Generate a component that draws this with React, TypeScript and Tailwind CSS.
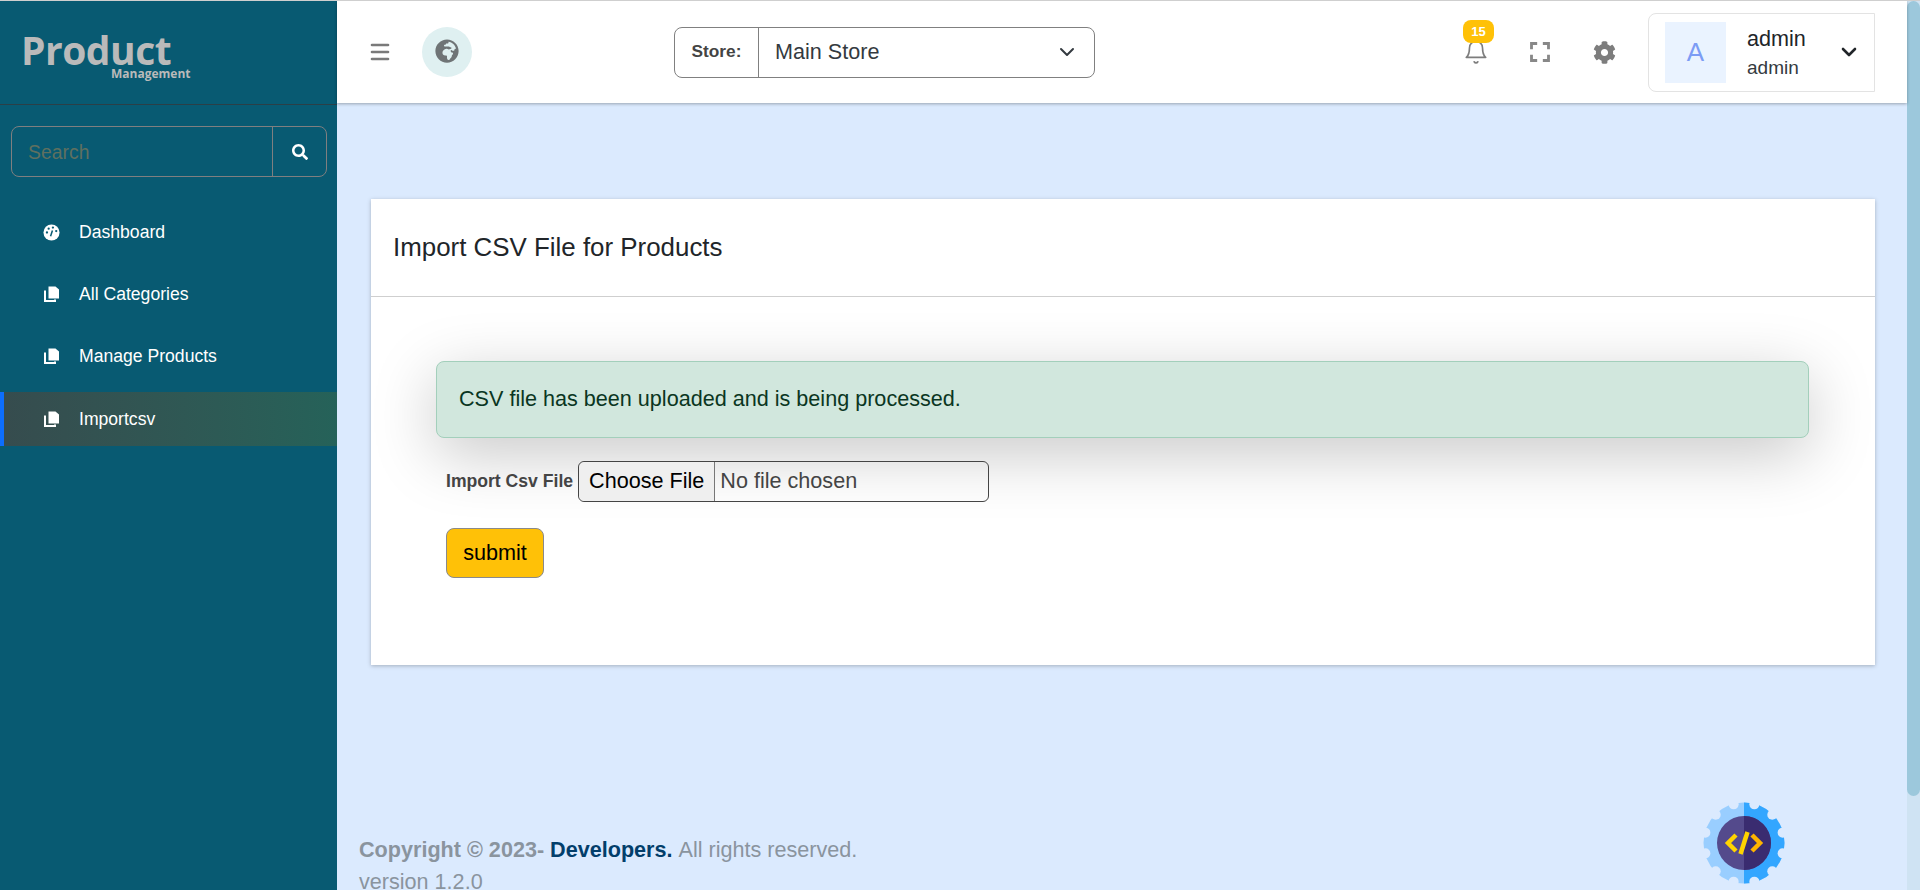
import { ChevronDown, Menu } from "lucide-react";
import { FaCog, FaGlobeAfrica, FaSearch } from "react-icons/fa";
import { MdFullscreen } from "react-icons/md";
import { LuBell } from "react-icons/lu";

function GaugeIcon() {
  return (
    <svg viewBox="0 0 18 18" className="w-[17px] h-[17px]">
      <circle cx="9" cy="9" r="8.5" fill="#fff" />
      <circle cx="4.2" cy="9" r="1.2" fill="#085a72" />
      <circle cx="6" cy="5" r="1.2" fill="#085a72" />
      <circle cx="10.5" cy="3.8" r="1.2" fill="#085a72" />
      <circle cx="14" cy="7.5" r="1.2" fill="#085a72" />
      <path d="M8 13l2-6" stroke="#085a72" strokeWidth="1.6" />
    </svg>
  );
}

function CopyIcon() {
  return (
    <svg viewBox="0 0 15 16" className="w-[15px] h-[16px]">
      <path d="M4.500 0.500h7l3.500 3v9h-10.500z" fill="#fff" />
      <path d="M1 4.500v10.500h10v-1.500" fill="none" stroke="#fff" strokeWidth="2" />
    </svg>
  );
}

const notches = [15, 45, 75, 105, 135, 165, 195, 225, 255, 285, 315, 345];

function DevLogo() {
  return (
    <svg viewBox="0 0 82 82" className="w-[82px] h-[82px]">
      <circle cx="41" cy="41" r="40.500" fill="#99ceff" />
      <path d="M41 0.500a40.500 40.500 0 0 1 0 81z" fill="#33a6ff" />
      {notches.map((deg) => (
        <circle
          key={deg}
          cx={41 + 40 * Math.sin((deg * Math.PI) / 180)}
          cy={41 - 40 * Math.cos((deg * Math.PI) / 180)}
          r="5"
          fill="#dbeafe"
        />
      ))}
      <circle cx="41" cy="41" r="27" fill="#544a8c" />
      <path d="M41 14a27 27 0 0 1 0 54z" fill="#3a2c70" />
      <path d="M33 33l-8 8 8 8" fill="none" stroke="#ffd400" strokeWidth="4.500" />
      <path d="M49 33l8 8-8 8" fill="none" stroke="#ffb400" strokeWidth="4.500" />
      <path d="M44.500 30l-7 22" fill="none" stroke="#ffd400" strokeWidth="4.500" />
    </svg>
  );
}

const navItems = [
  { label: "Dashboard", icon: <GaugeIcon /> },
  { label: "All Categories", icon: <CopyIcon /> },
  { label: "Manage Products", icon: <CopyIcon /> },
];

export default function App() {
  return (
    <div className="h-[890px] w-[1920px] overflow-hidden flex bg-[#dbeafe] border-t border-[#cfcfcf] font-['Liberation_Sans',Arial,sans-serif] text-[#212529]">
      {/* sidebar */}
      <aside className="w-[337px] shrink-0 bg-[#085a72] flex flex-col">
        <div className="h-[104px] shrink-0 border-b border-[#2b3f47] pl-[21px] pt-[26px] text-[#bababa] font-['Open_Sans',sans-serif] font-bold">
          <div className="text-[39px] leading-[46px] tracking-[-0.5px]">Product</div>
          <div className="text-[12px] leading-[12px] ml-[90px] -mt-[5px]">Management</div>
        </div>
        <div className="ml-[11px] mr-[10px] mt-[21px] h-[51px] flex rounded-lg border border-[#7f7f80]">
          <div className="flex-1 pl-[16px] pt-[3px] flex items-center text-[19.4px] text-[#5f7060]">Search</div>
          <div className="w-[54px] border-l border-[#7f7f80] flex items-center justify-center text-white">
            <FaSearch size={16} />
          </div>
        </div>
        <nav className="mt-[24px] flex flex-col">
          {navItems.map((item) => (
            <div key={item.label} className="h-[62px] flex items-center pl-[43px] gap-[19px] text-white text-[17.6px]">
              <span className="w-[17px] flex justify-center">{item.icon}</span>
              {item.label}
            </div>
          ))}
          <div className="h-[54px] mt-[5px] flex items-center pl-[43px] gap-[19px] text-white text-[17.6px] border-l-4 border-[#0d6efd] bg-gradient-to-r from-[#364c4e] to-[#256259]">
            <span className="-ml-[4px] w-[17px] flex justify-center"><CopyIcon /></span>
            Importcsv
          </div>
        </nav>
      </aside>

      {/* main column */}
      <div className="flex-1 flex flex-col min-w-0">
        <header className="h-[102px] shrink-0 bg-white shadow-[0_1px_3px_rgba(0,0,0,0.3)] flex items-center relative">
          <Menu className="ml-[31px] w-[24px] h-[24px] text-[#7a7a7a]" strokeWidth={2.6} />
          <div className="ml-[30px] w-[50px] h-[50px] rounded-full bg-[#dff0f1] flex items-center justify-center text-[#6f7476]">
            <FaGlobeAfrica size={24} className="-mt-[2px]" />
          </div>
          <div className="ml-[202px] w-[421px] h-[51px] flex rounded-lg border border-[#808080]">
            <div className="w-[84px] border-r border-[#808080] flex items-center justify-center font-bold text-[17.3px] text-[#444]">Store:</div>
            <div className="flex-1 flex items-center justify-between pl-[16px] pr-[15px] text-[21.6px] text-[#343a40]">
              Main Store
              <ChevronDown className="w-[24px] h-[24px]" strokeWidth={2} />
            </div>
          </div>
          <div className="ml-auto flex items-center">
            <div className="relative w-[28px] h-[28px] text-[#7d7d7d] flex items-center justify-center">
              <LuBell size={26} strokeWidth={1.5} />
              <span className="absolute -top-[18px] left-[1px] w-[31px] h-[23px] rounded-lg bg-[#ffc107] text-white text-[13px] font-bold flex items-center justify-center">15</span>
            </div>
            <MdFullscreen size={34} className="ml-[33px] text-[#888888]" />
            <FaCog size={23} className="ml-[36px] text-[#7d7d7d]" />
            <div className="ml-[32px] mr-[32px] w-[227px] h-[79px] rounded-tl-lg rounded-bl-lg border border-[#e3e3e3] flex items-center pl-[16px]">
              <div className="w-[61px] h-[61px] bg-[#eaf3ff] flex items-center justify-center text-[26px] text-[#7c9cf5]">A</div>
              <div className="ml-[21px] flex-1 pt-[1px]">
                <div className="text-[21.6px] leading-[30px]">admin</div>
                <div className="text-[19px] leading-[28px] text-[#343a40]">admin</div>
              </div>
              <ChevronDown className="mr-[13px] w-[24px] h-[24px] text-[#212529]" strokeWidth={2.6} />
            </div>
          </div>
        </header>

        <main className="flex-1 min-h-0 pl-[34px] pr-[32px] pt-[96px] flex flex-col">
          <section className="h-[466px] shrink-0 bg-white shadow-[0_1px_4px_rgba(0,0,0,0.25)]">
            <div className="h-[98px] border-b border-[#cfcfcf] flex items-center pl-[22px] text-[25.9px]">Import CSV File for Products</div>
            <div className="pt-[64px] pl-[65px] pr-[66px]">
              <div className="h-[77px] flex items-center pl-[22px] rounded-lg border border-[#a3cfbb] bg-[#d1e7dd] text-[21.6px] text-[#0a3622] shadow-[0_16px_64px_rgba(0,0,0,0.22)]">
                CSV file has been uploaded and is being processed.
              </div>
              <div className="mt-[23px] ml-[10px] flex items-center gap-[5px]">
                <label className="font-bold text-[17.6px] text-[#444]">Import Csv File</label>
                <input type="file" className="w-[411px] h-[41px] rounded-md border border-[#444] text-[21.6px] text-[#444] file:h-full file:px-[10px] file:mr-[5px] file:bg-[#efefef] file:text-black file:border-0 file:border-r file:border-solid file:border-[#777] file:rounded-l-md" />
              </div>
              <button className="mt-[26px] ml-[10px] w-[98px] h-[50px] rounded-lg bg-[#ffc107] border border-[#8a8a8a] text-[21.6px] text-black">submit</button>
            </div>
          </section>
          <footer className="mt-auto -mb-[8px] relative text-[21.6px] leading-[32px] text-[#8a949e]">
            <div className="-ml-[12px]">
              <span className="font-bold">Copyright © 2023- </span>
              <span className="font-bold text-[#023e6b]">Developers. </span>
              All rights reserved.
            </div>
            <div className="-ml-[12px]">version 1.2.0</div>
            <div className="absolute right-[90px] -top-[32px]"><DevLogo /></div>
          </footer>
        </main>
      </div>

      {/* scrollbar */}
      <div className="w-[13px] shrink-0 bg-[#cfe3f3]">
        <div className="h-[795px] rounded-b-lg rounded-t-lg bg-[#9cc8dc]" />
      </div>
    </div>
  );
}
